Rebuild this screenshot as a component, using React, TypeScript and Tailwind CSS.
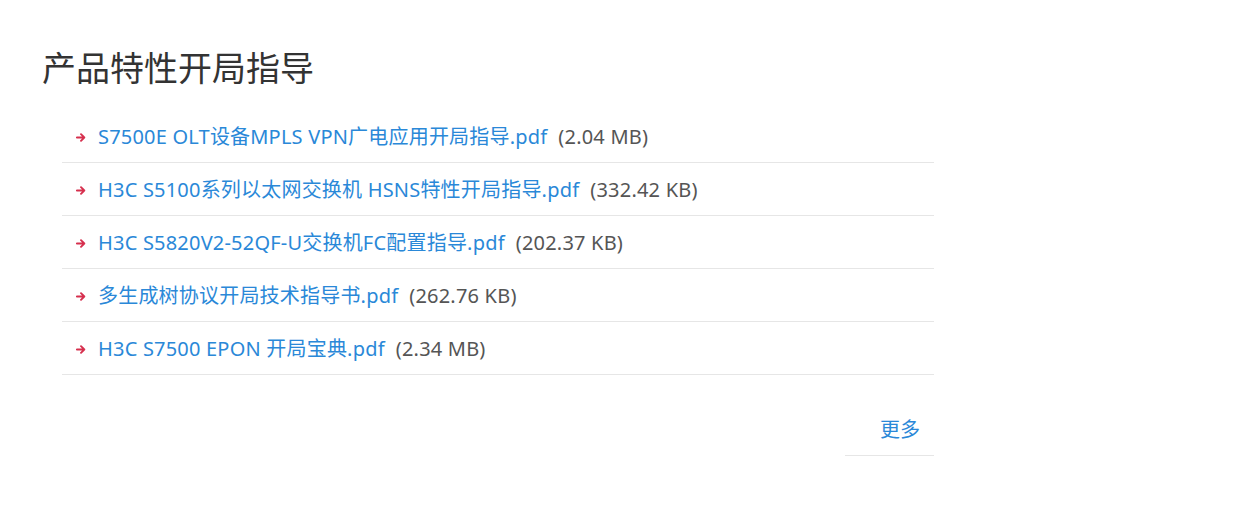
import React from "react";

const items = [
  { name: "S7500E OLT设备MPLS VPN广电应用开局指导.pdf", size: "(2.04 MB)" },
  { name: "H3C S5100系列以太网交换机 HSNS特性开局指导.pdf", size: "(332.42 KB)" },
  { name: "H3C S5820V2-52QF-U交换机FC配置指导.pdf", size: "(202.37 KB)" },
  { name: "多生成树协议开局技术指导书.pdf", size: "(262.76 KB)" },
  { name: "H3C S7500 EPON 开局宝典.pdf", size: "(2.34 MB)" },
];

function Arrow() {
  return (
    <svg width="10" height="9" viewBox="0 0 10 9" className="shrink-0">
      <path d="M0.8 4.5H8.2M5 1.2L8.3 4.5L5 7.8" stroke="#d6304e" strokeWidth="1.9" fill="none" strokeLinecap="round" strokeLinejoin="round" />
    </svg>
  );
}

export default function App() {
  return (
    <div
      className="w-[1246px] h-[519px] bg-white"
      style={{ fontFamily: '"Noto Sans", "Noto Sans CJK SC", sans-serif' }}
    >
      <div className="pt-[46px] pl-[42px]">
        <h1 className="text-[34px] leading-[44px] text-[#333] font-normal">产品特性开局指导</h1>
      </div>
      <ul className="mt-[20px] ml-[62px] w-[872px]">
        {items.map((it) => (
          <li
            key={it.name}
            className="h-[53px] flex items-center border-b border-[#e6e6e6] pl-[14px] pt-[2px]"
          >
            <Arrow />
            <span className="ml-[12px] text-[20px] leading-[26px] tracking-[0.2px] text-[#2a88d8] whitespace-nowrap">{it.name}</span>
            <span className="ml-[11px] text-[20px] leading-[26px] tracking-[0.2px] text-[#555] whitespace-nowrap">{it.size}</span>
          </li>
        ))}
      </ul>
      <div className="ml-[845px] mt-[30px] w-[89px] h-[51px] border-b border-[#e6e6e6] flex items-center justify-end pr-[14px]">
        <span className="text-[20px] text-[#2a88d8]">更多</span>
      </div>
    </div>
  );
}
